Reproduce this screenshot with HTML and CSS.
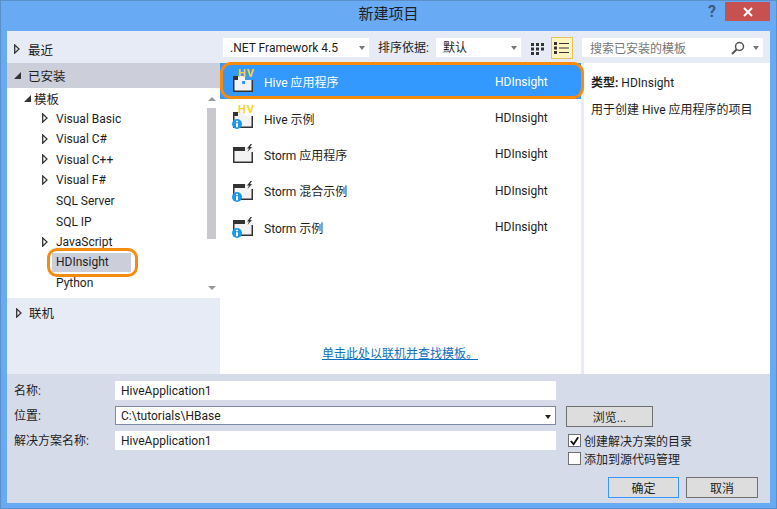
FILE: index.html
```html
<!DOCTYPE html>
<html lang="zh-CN">
<head>
    <meta charset="UTF-8">
    <title>新建项目</title>
    <link rel="stylesheet" href="styles.css">
</head>
<body>

<svg class="sprites" width="0" height="0">
    <symbol id="tri" viewBox="0 0 6 10">
        <path d="M.7 .9L5 5 .7 9.100z" fill="none" stroke="#333" stroke-width="1.300"/>
    </symbol>
    <symbol id="hive" viewBox="0 0 24 24">
        <path d="M2 6h12v4h8v12H2z" fill="#f3f3f3"/>
        <path d="M2 6h5v4H2z" fill="#333"/>
        <path d="M2.750 10v11.250h18.500V10" fill="none" stroke="#333" stroke-width="1.500"/>
    </symbol>
    <symbol id="storm" viewBox="0 0 24 24">
        <path d="M2 5h20v16H2z" fill="#f3f3f3"/>
        <path d="M2 5h12v4H2z" fill="#333"/>
        <path d="M2.750 9v11.250h18.500V10" fill="none" stroke="#333" stroke-width="1.500"/>
        <path d="M19.500 2l-3.500 4.500h2l-1.500 3.500 4.500-5h-2l2-3z" fill="#333"/>
    </symbol>
    <symbol id="info" viewBox="0 0 10 10">
        <circle cx="5" cy="5" r="5" fill="#1c97ea"/>
        <path d="M4 1.800h2v1.500H4zM4 4.200h2V8.200H4z" fill="#fff"/>
    </symbol>
</svg>

<div class="window">
    <header class="titlebar">
        <h1>新建项目</h1>
        <span class="help">?</span>
        <button class="close">
            <svg width="10" height="10" viewBox="0 0 10 10"><path d="M1 1l8 8M9 1l-8 8" stroke="#fff" stroke-width="2"/></svg>
        </button>
    </header>

    <div class="main">
        <aside class="sidebar">
            <div class="side-head recent"><svg class="tri"><use href="#tri"/></svg>最近</div>
            <div class="side-head installed"><i class="tri-open"></i>已安装</div>
            <div class="tree-box">
                <ul class="tree">
                    <li class="lvl1"><i class="tri-open"></i>模板</li>
                    <li><svg class="tri"><use href="#tri"/></svg>Visual Basic</li>
                    <li><svg class="tri"><use href="#tri"/></svg>Visual C#</li>
                    <li><svg class="tri"><use href="#tri"/></svg>Visual C++</li>
                    <li><svg class="tri"><use href="#tri"/></svg>Visual F#</li>
                    <li>SQL Server</li>
                    <li>SQL IP</li>
                    <li><svg class="tri"><use href="#tri"/></svg>JavaScript</li>
                    <li class="selected"><span>HDInsight</span></li>
                    <li>Python</li>
                </ul>
                <div class="scrollbar">
                    <i class="arrow-up"></i>
                    <div class="thumb"></div>
                    <i class="arrow-down"></i>
                </div>
            </div>
            <div class="side-head online"><svg class="tri"><use href="#tri"/></svg>联机</div>
        </aside>

        <section class="center">
            <div class="toolbar">
                <div class="select framework">.NET Framework 4.5<i class="caret"></i></div>
                <label class="sort-label">排序依据:</label>
                <div class="select sort">默认<i class="caret"></i></div>
                <button class="view-btn grid">
                    <svg width="14" height="14" viewBox="0 0 14 14" fill="#333"><path d="M0 1h3v3H0zM5 1h3v3H5zM10 1h3v3h-3zM0 5.500h3v3H0zM5 5.500h3v3H5zM10 5.500h3v3h-3zM0 10h3v3H0zM5 10h3v3H5z"/></svg>
                </button>
                <button class="view-btn active">
                    <svg width="15" height="14" viewBox="0 0 15 14" fill="#333"><path d="M0 1h3v3H0zM0 5.500h3v3H0zM0 10h3v3H0zM5 2h10v1H5zM5 6.500h10v1H5zM5 11h10v1H5z"/></svg>
                </button>
                <div class="search">
                    <span>搜索已安装的模板</span>
                    <svg width="14" height="14" viewBox="0 0 14 14" fill="none" stroke="#555" stroke-width="1.500"><circle cx="8.500" cy="5.500" r="4"/><path d="M5.500 8.500L1 13" stroke-width="2"/></svg>
                    <i class="caret"></i>
                </div>
            </div>

            <div class="panes">
                <div class="list">
                    <div class="item active">
                        <svg class="ico" width="24" height="24"><use href="#hive"/></svg>
                        <b class="hv">HV</b>
                        <i class="dot"></i>
                        <span class="name">Hive 应用程序</span>
                        <span class="kind">HDInsight</span>
                    </div>
                    <div class="item">
                        <svg class="ico" width="24" height="24"><use href="#hive"/></svg>
                        <b class="hv">HV</b>
                        <svg class="badge" width="10" height="10"><use href="#info"/></svg>
                        <span class="name">Hive 示例</span>
                        <span class="kind">HDInsight</span>
                    </div>
                    <div class="item">
                        <svg class="ico" width="24" height="24"><use href="#storm"/></svg>
                        <span class="name">Storm 应用程序</span>
                        <span class="kind">HDInsight</span>
                    </div>
                    <div class="item">
                        <svg class="ico" width="24" height="24"><use href="#storm"/></svg>
                        <svg class="badge" width="10" height="10"><use href="#info"/></svg>
                        <span class="name">Storm 混合示例</span>
                        <span class="kind">HDInsight</span>
                    </div>
                    <div class="item">
                        <svg class="ico" width="24" height="24"><use href="#storm"/></svg>
                        <svg class="badge" width="10" height="10"><use href="#info"/></svg>
                        <span class="name">Storm 示例</span>
                        <span class="kind">HDInsight</span>
                    </div>
                    <a class="online-link" href="#">单击此处以联机并查找模板。</a>
                </div>
                <div class="details">
                    <p><b>类型:</b> HDInsight</p>
                    <p class="desc">用于创建 Hive 应用程序的项目</p>
                </div>
            </div>
        </section>
    </div>

    <form class="bottom">
        <div class="fields">
            <label>名称:</label>
            <div class="input">HiveApplication1</div>
            <label>位置:</label>
            <div class="input combo">C:\tutorials\HBase<i class="caret dark"></i></div>
            <label>解决方案名称:</label>
            <div class="input">HiveApplication1</div>
        </div>
        <div class="side-actions">
            <button type="button" class="btn browse">浏览...</button>
            <div class="check-row"><i class="check"><svg width="12" height="12" viewBox="0 0 12 12"><path d="M2 6l3 3.500L10 2" fill="none" stroke="#111" stroke-width="2"/></svg></i>创建解决方案的目录</div>
            <div class="check-row"><i class="check"></i>添加到源代码管理</div>
            <div class="actions">
                <button type="button" class="btn primary">确定</button>
                <button type="button" class="btn">取消</button>
            </div>
        </div>
    </form>
</div>

</body>
</html>
```

FILE: styles.css
```css
*, *::after {
    box-sizing: border-box;
}

body {
    margin: 0;
    font-family: Roboto, "Noto Sans CJK SC", sans-serif;
    font-size: 12px;
    color: #1e1e1e;
}

.sprites {
    position: absolute;
}

.window {
    width: 777px;
    height: 509px;
    display: flex;
    flex-direction: column;
    background-color: #69aaf5;
    border: 1px solid #5b8fc9;
    padding: 0 6px 5px;
    overflow: hidden;
}

/* title bar */
.titlebar {
    height: 30px;
    flex: none;
    display: flex;
    align-items: flex-start;
    justify-content: flex-end;
    position: relative;
}

.titlebar h1 {
    position: absolute;
    left: 0;
    right: 0;
    top: 3px;
    margin: 0;
    text-align: center;
    font-size: 15px;
    font-weight: normal;
    line-height: 20px;
}

.help {
    font-size: 16px;
    font-weight: bold;
    color: #3f5a7c;
    margin: 1px 9px 0 0;
    line-height: 20px;
}

.close {
    width: 45px;
    height: 19px;
    margin: 1px 0 0 0;
    padding: 0;
    border: none;
    background-color: #c75050;
    display: flex;
    align-items: center;
    justify-content: center;
}

.main {
    height: 343px;
    flex: none;
    display: flex;
    background-color: #e6ebf5;
}

/* left side */
.sidebar {
    width: 213px;
    flex: none;
    display: flex;
    flex-direction: column;
}

.side-head {
    height: 32px;
    display: flex;
    align-items: center;
    padding-left: 7px;
    font-size: 12.5px;
}

.side-head.recent {
    padding-top: 4px;
}

.side-head.installed {
    height: 25px;
    padding-bottom: 1px;
    background-color: #ccced9;
}

.side-head.online {
    flex: 1;
    align-items: flex-start;
    padding: 5px 0 0 9px;
}

.tri {
    width: 6px;
    height: 10px;
    flex: none;
    margin-right: 8px;
}

.side-head.online .tri {
    margin: 5px 7px 0 0;
}

.tri-open {
    width: 0;
    height: 0;
    flex: none;
    display: inline-block;
    margin-right: 7px;
    border-right: 7px solid #333;
    border-top: 7px solid transparent;
}

.tree-box {
    height: 210px;
    flex: none;
    display: flex;
    background-color: #fff;
}

.tree {
    flex: 1;
    list-style: none;
    margin: -0.3px 0 0;
    padding: 0;
}

.tree li {
    height: 20.600px;
    display: flex;
    align-items: center;
    padding-left: 49px;
    position: relative;
}

.tree li .tri {
    position: absolute;
    left: 35px;
    top: 5px;
    margin: 0;
}

.tree li.lvl1 {
    padding-left: 17px;
    font-size: 12.5px;
}

.tree li.lvl1 .tri-open {
    margin: 0 3px 0 0;
}

.selected span {
    width: 79px;
    height: 19px;
    line-height: 19px;
    margin-left: -4px;
    padding-left: 4px;
    background-color: #ccced9;
}

.selected::after {
    content: "";
    position: absolute;
    left: 40px;
    top: -4px;
    width: 91px;
    height: 29px;
    border: 3px solid #f68b0f;
    border-radius: 10px;
}

.scrollbar {
    width: 17px;
    flex: none;
    background-color: #fff;
    display: flex;
    flex-direction: column;
    align-items: center;
    padding: 9px 0 8px;
}

.thumb {
    width: 9px;
    height: 131px;
    margin: 7px 0 47px;
    background-color: #c8c8ce;
}

.arrow-up, .arrow-down {
    width: 0;
    height: 0;
    border-left: 4px solid transparent;
    border-right: 4px solid transparent;
}

.arrow-up {
    border-bottom: 4px solid #999;
}

.arrow-down {
    border-top: 4px solid #999;
}

/* middle and right */
.center {
    flex: 1;
    display: flex;
    flex-direction: column;
    min-width: 0;
}

.toolbar {
    height: 32px;
    flex: none;
    display: flex;
    align-items: flex-start;
    padding: 7px 0 0 3px;
}

.select {
    height: 19px;
    background-color: #fff;
    line-height: 20px;
    padding-left: 7px;
    position: relative;
}

.framework {
    width: 146px;
}

.sort-label {
    line-height: 20px;
    margin: 0 7px 0 9px;
}

.sort {
    width: 85px;
}

.caret {
    position: absolute;
    right: 4px;
    top: 8px;
    width: 0;
    height: 0;
    border-left: 3.500px solid transparent;
    border-right: 3.500px solid transparent;
    border-top: 4px solid #777;
}

.caret.dark {
    border-top-color: #222;
}

.view-btn {
    width: 22px;
    height: 22px;
    padding: 0;
    margin-top: -1px;
    border: 1px solid transparent;
    background: none;
    display: flex;
    align-items: center;
    justify-content: center;
}

.view-btn.grid {
    width: 21px;
    margin: 0 2px 0 7px;
}

.view-btn.active {
    background-color: #fdf4bf;
    border-color: #e5c365;
}

.search {
    width: 181px;
    height: 19px;
    margin-left: 9px;
    background-color: #fff;
    position: relative;
    display: flex;
    align-items: center;
    padding-left: 8px;
    color: #777;
}

.search span {
    flex: 1;
}

.search svg {
    margin-right: 18px;
}

.panes {
    flex: 1;
    display: flex;
    min-height: 0;
}

.list {
    width: 361px;
    flex: none;
    background-color: #fff;
    position: relative;
}

.item {
    height: 36.400px;
    display: flex;
    align-items: center;
    padding: 1px 0 0 11px;
    position: relative;
}

.item .ico {
    flex: none;
    margin-right: 9px;
}

.item .name {
    width: 231px;
}

.item.active {
    background-color: #3399ff;
    color: #fff;
}

.item.active::after {
    content: "";
    position: absolute;
    left: 0;
    right: -3px;
    top: -1px;
    bottom: 0;
    border: 3px solid #f68b0f;
    border-radius: 11px;
}

.hv {
    position: absolute;
    left: 18px;
    top: 5px;
    font-size: 11px;
    line-height: 12px;
    letter-spacing: 1px;
    font-weight: bold;
    color: #ffd02b;
}

.dot {
    position: absolute;
    left: 22px;
    top: 18px;
    width: 3px;
    height: 3px;
    background-color: #3399ff;
}

.badge {
    position: absolute;
    left: 12px;
    top: 19.500px;
}

.online-link {
    position: absolute;
    left: 102px;
    top: 281px;
    color: #0e70c0;
}

.details {
    flex: 1;
    margin-left: 3px;
    background-color: #fff;
    padding: 12px 7px;
}

.details p {
    margin: 0;
    line-height: 16px;
}

.details .desc {
    margin-top: 11px;
}

/* bottom form */
.bottom {
    flex: 1;
    display: flex;
    background-color: #d6dbe9;
    padding: 7px 0 0 7px;
}

.fields {
    display: grid;
    grid-template-columns: 101px 441px;
    grid-auto-rows: 19px;
    row-gap: 6px;
    align-items: center;
}

.fields label {
    margin-bottom: 2px;
}

.input {
    height: 19px;
    background-color: #fff;
    padding-left: 6px;
    line-height: 20px;
    position: relative;
}

.input.combo {
    border: 1px solid #7d8aa3;
    padding-left: 5px;
    line-height: 18px;
}

.side-actions {
    flex: 1;
    padding: 25px 0 0 10px;
}

.btn {
    height: 21px;
    width: 72px;
    padding: 0;
    border: 1px solid #707070;
    background-color: #dddddd;
    font: inherit;
    color: inherit;
}

.btn.browse {
    width: 87px;
    display: block;
    margin-bottom: 5px;
}

.btn.primary {
    width: 71px;
    border-color: #3399ff;
}

.check-row {
    display: flex;
    align-items: center;
    height: 17.500px;
    padding-left: 2px;
}

.check {
    width: 13px;
    height: 13px;
    flex: none;
    margin-right: 3px;
    background-color: #fff;
    border: 1px solid #707070;
    display: flex;
    align-items: center;
    justify-content: center;
}

.actions {
    display: flex;
    justify-content: flex-end;
    gap: 7px;
    margin: 10px 12px 0 0;
}
```
